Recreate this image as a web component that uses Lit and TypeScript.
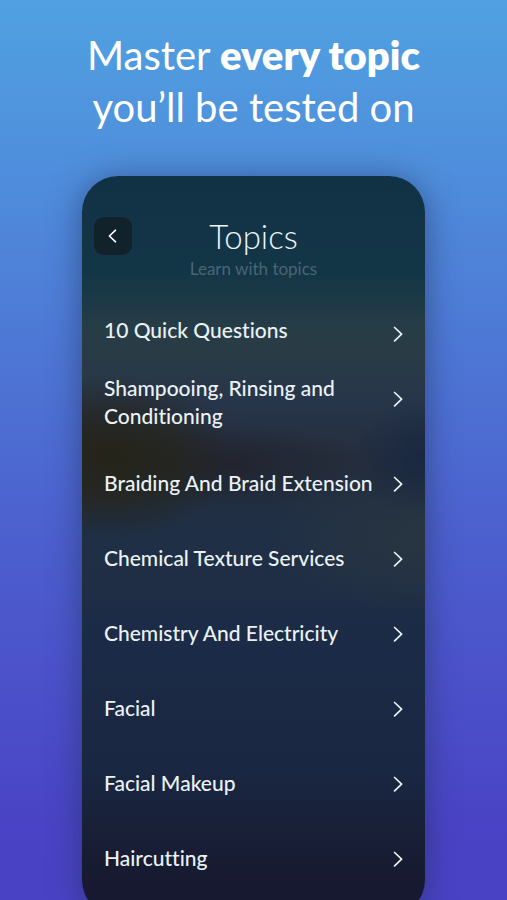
import { LitElement, html, css } from "lit";
import { customElement, property } from "lit/decorators.js";

const TOPICS = [
  { label: "10 Quick Questions", kind: "lead" },
  { label: "Shampooing, Rinsing and Conditioning", kind: "tall" },
  { label: "Braiding And Braid Extension", kind: "" },
  { label: "Chemical Texture Services", kind: "" },
  { label: "Chemistry And Electricity", kind: "" },
  { label: "Facial", kind: "" },
  { label: "Facial Makeup", kind: "" },
  { label: "Haircutting", kind: "" },
];

@customElement("topic-row")
export class TopicRow extends LitElement {
  @property() label = "";

  static styles = css`
    :host {
      display: block;
    }
    .row {
      display: flex;
      align-items: center;
      justify-content: space-between;
      gap: 12px;
      box-sizing: border-box;
      width: 100%;
      min-height: var(--row-height, 75px);
      padding: var(--row-padding, 16px) 22px;
      border: 0;
      background: none;
      color: #eaf2f6;
      font: 500 21px/28px Lato, "Open Sans", sans-serif;
      font-variant-ligatures: none;
      text-align: left;
      cursor: pointer;
    }
    .label {
      align-self: var(--label-align, center);
      padding-bottom: var(--label-lift, 2px);
    }
    .chevron {
      flex: none;
      width: 10px;
      height: 16px;
      fill: none;
      stroke: currentColor;
      stroke-width: 1.7;
      stroke-linecap: round;
      stroke-linejoin: round;
    }
  `;

  render() {
    return html`
      <button class="row" type="button">
        <span class="label">${this.label}</span>
        <svg class="chevron" viewBox="0 0 10 16" aria-hidden="true">
          <path d="M1.6 1.5 8.6 8.2 1.6 14.9" />
        </svg>
      </button>
    `;
  }
}

@customElement("app-root")
export class AppRoot extends LitElement {
  static styles = css`
    :host {
      display: block;
      height: 100vh;
      overflow: hidden;
      background: linear-gradient(#50a1e1, #4f8fdc 18%, #4c5fce 60%, #4a43c5 92%, #4a42c5);
      font-family: Lato, "Open Sans", sans-serif;
    }
    .headline {
      margin: 0;
      padding: 29px 16px 43px;
      color: #fff;
      font-size: 40px;
      line-height: 52px;
      font-weight: 400;
      text-align: center;
    }
    .headline strong {
      font-weight: 800;
    }
    .screen {
      margin: 0 82px;
      padding-bottom: 20px;
      border-radius: 36px;
      background:
        radial-gradient(ellipse 36% 11% at 8% 38%, #252419, #252419b0 50%, #25241900),
        radial-gradient(ellipse 40% 6% at 42% 39%, #20212bcc, #20212b00),
        radial-gradient(ellipse 22% 8% at 100% 38%, #172742e6, #17274200),
        radial-gradient(ellipse 46% 10% at 100% 49%, #2b3740cc, #2b374000),
        linear-gradient(#113245, #133647 13%, #273d46 21%, #293b45 24%, #27354a 31%, #252e3c 38%, #1f2f45 48%, #1f2e45 56%, #1b2a46 64%, #1a2742 80%, #171a30 95%, #171830);
      box-shadow: 0 4px 32px #20305899;
    }
    .top {
      display: grid;
      grid-template-columns: 38px 1fr 38px;
      align-items: center;
      padding: 40px 12px 34px;
      text-align: center;
    }
    .back {
      display: grid;
      place-items: center;
      width: 38px;
      height: 38px;
      padding: 0 2px 0 0;
      border: 0;
      border-radius: 10px;
      background: #12222b;
      color: #fff;
      cursor: pointer;
    }
    .back-icon {
      width: 9px;
      height: 14px;
      fill: none;
      stroke: currentColor;
      stroke-width: 1.6;
      stroke-linecap: round;
      stroke-linejoin: round;
    }
    .title {
      margin: 0;
      color: #edf4f8;
      font-size: 33px;
      line-height: 40px;
      font-weight: 300;
    }
    .subtitle {
      grid-column: 1 / -1;
      margin: 0;
      color: #4a6671;
      font-size: 17px;
      line-height: 26px;
    }
    .topics {
      margin: 0;
      padding: 0;
      list-style: none;
    }
    .lead {
      --row-height: 35px;
      --row-padding: 0px;
      --label-align: start;
    }
    .tall {
      --row-height: 95px;
      --label-align: end;
      --label-lift: 0px;
    }
  `;

  render() {
    return html`
      <h1 class="headline">Master <strong>every topic</strong><br />you’ll be tested on</h1>
      <main class="screen">
        <header class="top">
          <button class="back" type="button" aria-label="Back">
            <svg class="back-icon" viewBox="0 0 9 14" aria-hidden="true">
              <path d="M7.6 1.2 1.4 7l6.2 5.8" />
            </svg>
          </button>
          <h2 class="title">Topics</h2>
          <p class="subtitle">Learn with topics</p>
        </header>
        <ul class="topics">
          ${TOPICS.map(
            (topic) => html`<li class=${topic.kind}><topic-row label=${topic.label}></topic-row></li>`
          )}
        </ul>
      </main>
    `;
  }
}
